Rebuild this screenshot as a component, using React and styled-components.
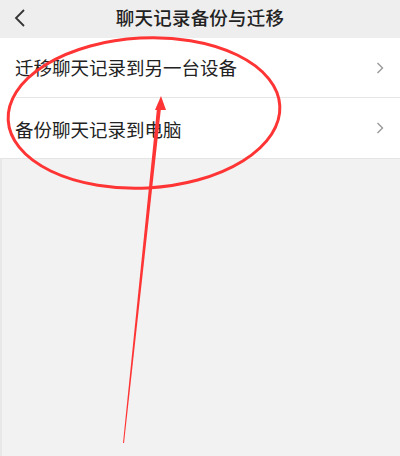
import React from 'react'
import styled, { createGlobalStyle } from 'styled-components'

const items = ['迁移聊天记录到另一台设备', '备份聊天记录到电脑']

const Global = createGlobalStyle`
  html, body {
    margin: 0;
    padding: 0;
    background: #f2f2f2;
  }
  body {
    font-family: "Noto Sans CJK SC", "Noto Sans", sans-serif;
  }
`

const Screen = styled.div`
  position: relative;
  width: 400px;
  height: 456px;
  overflow: hidden;
  background: #f2f2f2;
  display: flex;
  flex-direction: column;
`

const Header = styled.div`
  height: 38px;
  background: #eeeeee;
  display: flex;
  align-items: center;
  justify-content: center;
  position: relative;
  flex-shrink: 0;
`

const Back = styled.div`
  position: absolute;
  left: 14px;
  top: 7px;
  width: 16px;
  height: 22px;
  display: flex;
  align-items: center;
`

const Title = styled.div`
  font-size: 18.5px;
  font-weight: 500;
  color: #222;
  letter-spacing: 0.2px;
  margin-top: -4px;
`

const List = styled.div`
  background: #fff;
  display: flex;
  flex-direction: column;
`

const Row = styled.div`
  height: 60px;
  display: flex;
  align-items: center;
  justify-content: space-between;
  padding: 0 16px 0 15px;
  position: relative;
  box-sizing: border-box;
  &:not(:last-child)::after {
    content: '';
    position: absolute;
    left: 16px;
    right: 0;
    bottom: 0;
    height: 1px;
    background: #e6e6e6;
  }
`

const Label = styled.span`
  font-size: 18.5px;
  color: #222;
  margin-top: ${p => (p.first ? '-2px' : '2px')};
`

const Rest = styled.div`
  flex: 1;
  border-top: 1px solid #e4e4e4;
  border-left: 2px solid #e8e8e8;
`

const Overlay = styled.svg`
  position: absolute;
  left: 0;
  top: 0;
  pointer-events: none;
`

const Chevron = () => (
  <svg width="8" height="12" viewBox="0 0 8 12">
    <path d="M1.5 1 L6.5 6 L1.5 11" fill="none" stroke="#999" strokeWidth="1.4" />
  </svg>
)

const App = () => (
  <>
    <Global />
    <Screen>
      <Header>
        <Back>
          <svg width="12" height="20" viewBox="0 0 12 20">
            <path d="M10 2 L2 10 L10 18" fill="none" stroke="#333" strokeWidth="1.8" />
          </svg>
        </Back>
        <Title>聊天记录备份与迁移</Title>
      </Header>
      <List>
        {items.map((item, i) => (
          <Row key={item}>
            <Label first={i === 0}>{item}</Label>
            <Chevron />
          </Row>
        ))}
      </List>
      <Rest />
      <Overlay width="400" height="456" viewBox="0 0 400 456">
        <ellipse
          cx="144"
          cy="113"
          rx="136"
          ry="75"
          fill="none"
          stroke="#ff3434"
          strokeWidth="3"
          transform="rotate(-3 144 113)"
        />
        <polygon points="123,443 157,108 161,108 124,443" fill="#ff3434" />
        <polygon points="161,96 155,110 166,110" fill="#ff3434" />
      </Overlay>
    </Screen>
  </>
)

export default App
